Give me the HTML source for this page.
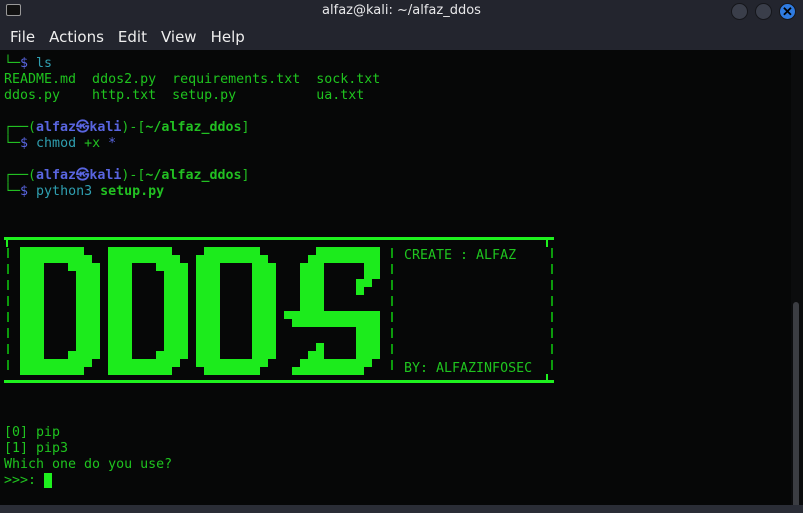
<!DOCTYPE html>
<html><head><meta charset="utf-8"><style>
*{margin:0;padding:0;box-sizing:border-box}
body{width:803px;height:513px;overflow:hidden;background:#060707;position:relative;font-family:"DejaVu Sans Mono","Liberation Mono",monospace}
#title{position:absolute;left:0;top:0;width:803px;height:50px;background:#23252e}
#title .t{position:absolute;left:0;width:803px;top:3px;text-align:center;color:#e8e8ea;font:13px "DejaVu Sans","Liberation Sans",sans-serif}
.btn{position:absolute;top:3px;width:17px;height:17px;border-radius:50%;background:#3a3e4a;border:1px solid #15161b}
#menu{position:absolute;left:10px;top:28px;color:#eee;font:15px "DejaVu Sans","Liberation Sans",sans-serif;word-spacing:0}
#menu span{margin-right:14px}
.ic{position:absolute;left:6px;top:4px;width:15px;height:12px;border:1px solid #999;border-radius:2px;background:#111}
pre{position:absolute;left:4px;font:13.3px/16px "DejaVu Sans Mono",monospace;color:#1fc41f;white-space:pre}
.g{color:#22c022}.b{color:#5965e0;font-weight:bold}.bl{color:#5965e0}.c{color:#2f9fb0}.bg{color:#22c022;font-weight:bold}
.sb{position:absolute;left:791px;top:50px;width:12px;height:463px;background:#0b0c0d}
.th{position:absolute;left:793px;top:302px;width:6px;height:211px;background:#3b3d42;border-radius:3px}
</style></head><body>
<div id="title"><div class="ic"></div><div class="t">alfaz@kali: ~/alfaz_ddos</div>
<div class="btn" style="left:731px"></div><div class="btn" style="left:755px"></div>
<div class="btn" style="left:779px;background:#2f7be0;color:#000;font:bold 13px sans-serif;text-align:center;line-height:16px">✕</div>
<div id="menu"><span>File</span><span>Actions</span><span>Edit</span><span>View</span><span>Help</span></div></div>
<pre style="top:56px"><span class="g">└─</span><span class="bl">$</span> <span class="c">ls</span>
README.md  ddos2.py  requirements.txt  sock.txt
ddos.py    http.txt  setup.py          ua.txt

<span class="g">┌──(</span><span class="b">alfaz㉿kali</span><span class="g">)-[</span><span class="bg">~/alfaz_ddos</span><span class="g">]</span>
<span class="g">└─</span><span class="bl">$</span> <span class="c">chmod</span> <span class="g">+x</span> <span class="bl">*</span>

<span class="g">┌──(</span><span class="b">alfaz㉿kali</span><span class="g">)-[</span><span class="bg">~/alfaz_ddos</span><span class="g">]</span>
<span class="g">└─</span><span class="bl">$</span> <span class="c">python3</span> <span class="bg">setup.py</span></pre>
<svg style="position:absolute;left:0;top:0" width="803" height="513">
<g fill="#1ef01e">
<rect x="4" y="237" width="550" height="3"/><rect x="4" y="380" width="550" height="3"/>
<rect x="6" y="237" width="2" height="10"/><rect x="546" y="237" width="2" height="10"/><rect x="546" y="374" width="2" height="8"/>
</g>
<g stroke="#0c9a0c" stroke-width="2" stroke-dasharray="10 6">
<line x1="8" y1="248" x2="8" y2="374"/><line x1="392" y1="248" x2="392" y2="374"/><line x1="552" y1="248" x2="552" y2="374"/>
</g>
<g fill="#1ceb1c" id="art"></g>
<text x="404" y="259" fill="#1fc41f" font-family="DejaVu Sans Mono" font-size="13.3">CREATE : ALFAZ</text>
<text x="404" y="372" fill="#1fc41f" font-family="DejaVu Sans Mono" font-size="13.3">BY: ALFAZINFOSEC</text>
</svg>
<pre style="top:425px">[0] pip
[1] pip3
Which one do you use?
&gt;&gt;&gt;: <span style="background:#1ef01e"> </span></pre>
<div class="sb"><div class="th" style="left:2px;top:252px"></div></div>
<div style="position:absolute;left:0;top:505px;width:803px;height:8px;background:#2a2d36"></div>
<script>
var D={0:[[0,7]],1:[[0,8]],2:[[0,2],[6,9]],13:[[0,2],[6,9]],14:[[0,8]],15:[[0,7]]};
for(var r=3;r<13;r++)D[r]=[[0,2],[7,9]];
var O={0:[[1,7]],1:[[0,8]],14:[[0,8]],15:[[1,7]]};
for(var r=2;r<14;r++)O[r]=[[0,2],[7,9]];
var S={0:[[4,11]],1:[[3,11]],2:[[2,4],[10,11]],3:[[2,4],[10,11]],4:[[2,4],[9,10]],5:[[2,4],[9,9]],6:[[2,4]],7:[[2,4]],8:[[0,11]],9:[[1,11]],10:[[9,11]],11:[[9,11]],12:[[4,4],[9,11]],13:[[3,4],[9,11]],14:[[2,10]],15:[[1,9]]};
var g=document.getElementById('art'),h='';
function L(m,off){for(var r in m)m[r].forEach(function(s){h+='<rect x="'+(20+(off+s[0])*8)+'" y="'+(247+r*8)+'" width="'+((s[1]-s[0]+1)*8)+'" height="8"/>';});}
L(D,0);L(D,11);L(O,22);L(S,33);
g.innerHTML=h;
</script>
</body></html>
